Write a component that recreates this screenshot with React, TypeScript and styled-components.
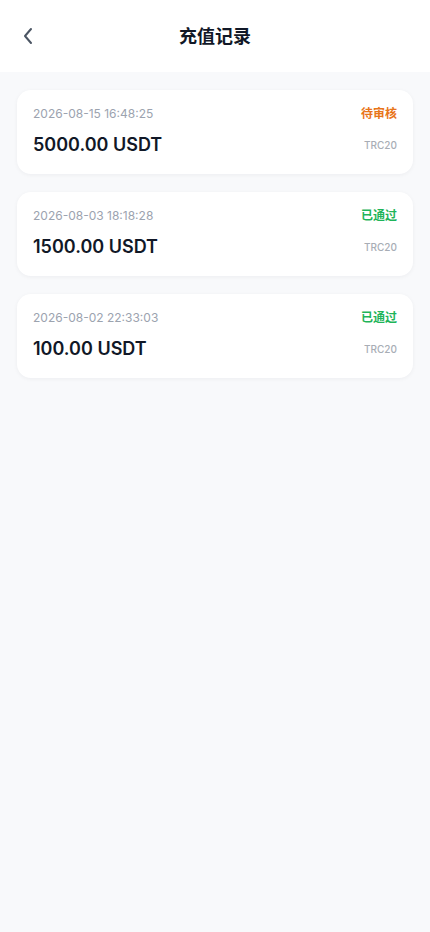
import React from "react";
import styled, { createGlobalStyle } from "styled-components";

const Global = createGlobalStyle`
  html, body { margin: 0; padding: 0; background: #f8f9fb; }
  body { font-family: Inter, "Noto Sans CJK SC", sans-serif; }
  #root { min-height: 932px; }
`;

const Page = styled.div`
  width: 430px;
  min-height: 932px;
  background: #f8f9fb;
`;

const Header = styled.header`
  height: 72px;
  background: #ffffff;
  display: grid;
  grid-template-columns: 56px 1fr 56px;
  align-items: center;
`;

const BackButton = styled.button`
  border: none;
  background: transparent;
  padding: 0 0 0 22px;
  height: 40px;
  display: flex;
  align-items: center;
  color: #4b5563;
  cursor: pointer;
`;

const Title = styled.h1`
  margin: 0 0 3px;
  text-align: center;
  font-size: 18px;
  font-weight: 700;
  color: #111827;
  font-family: Inter, "Noto Sans CJK SC", sans-serif;
`;

const List = styled.div`
  display: flex;
  flex-direction: column;
  gap: 18px;
  padding: 18px 17px;
`;

const Card = styled.div`
  background: #ffffff;
  border-radius: 14px;
  box-shadow: 0 1px 4px rgba(17, 24, 39, 0.05);
  padding: 15px 16px 16px;
  display: flex;
  flex-direction: column;
  gap: 10px;
  height: 84px;
  box-sizing: border-box;
`;

const Row = styled.div`
  display: flex;
  justify-content: space-between;
  align-items: center;
`;

const DateText = styled.span`
  font-size: 12px;
  color: #9ca3af;
  line-height: 18px;
`;

const Status = styled.span<{ $tone: "pending" | "ok" }>`
  font-size: 12px;
  font-weight: 600;
  line-height: 18px;
  color: ${(p) => (p.$tone === "pending" ? "#e8751a" : "#1fb45a")};
`;

const Amount = styled.span`
  font-size: 18px;
  font-weight: 600;
  color: #111827;
  line-height: 24px;
`;

const Network = styled.span`
  font-size: 10px;
  color: #a8adb5;
  font-weight: 500;
`;

const records = [
  { date: "2026-08-15 16:48:25", status: "待审核", tone: "pending" as const, amount: "5000.00 USDT" },
  { date: "2026-08-03 18:18:28", status: "已通过", tone: "ok" as const, amount: "1500.00 USDT" },
  { date: "2026-08-02 22:33:03", status: "已通过", tone: "ok" as const, amount: "100.00 USDT" },
];

export default function App() {
  return (
    <Page>
      <Global />
      <Header>
        <BackButton aria-label="back">
          <svg width="12" height="18" viewBox="0 0 12 18" fill="none" stroke="currentColor" strokeWidth="2" strokeLinecap="round" strokeLinejoin="round">
            <path d="M9 2L3 9l6 7" />
          </svg>
        </BackButton>
        <Title>充值记录</Title>
        <div />
      </Header>
      <List>
        {records.map((r) => (
          <Card key={r.date}>
            <Row>
              <DateText>{r.date}</DateText>
              <Status $tone={r.tone}>{r.status}</Status>
            </Row>
            <Row>
              <Amount>{r.amount}</Amount>
              <Network>TRC20</Network>
            </Row>
          </Card>
        ))}
      </List>
    </Page>
  );
}
